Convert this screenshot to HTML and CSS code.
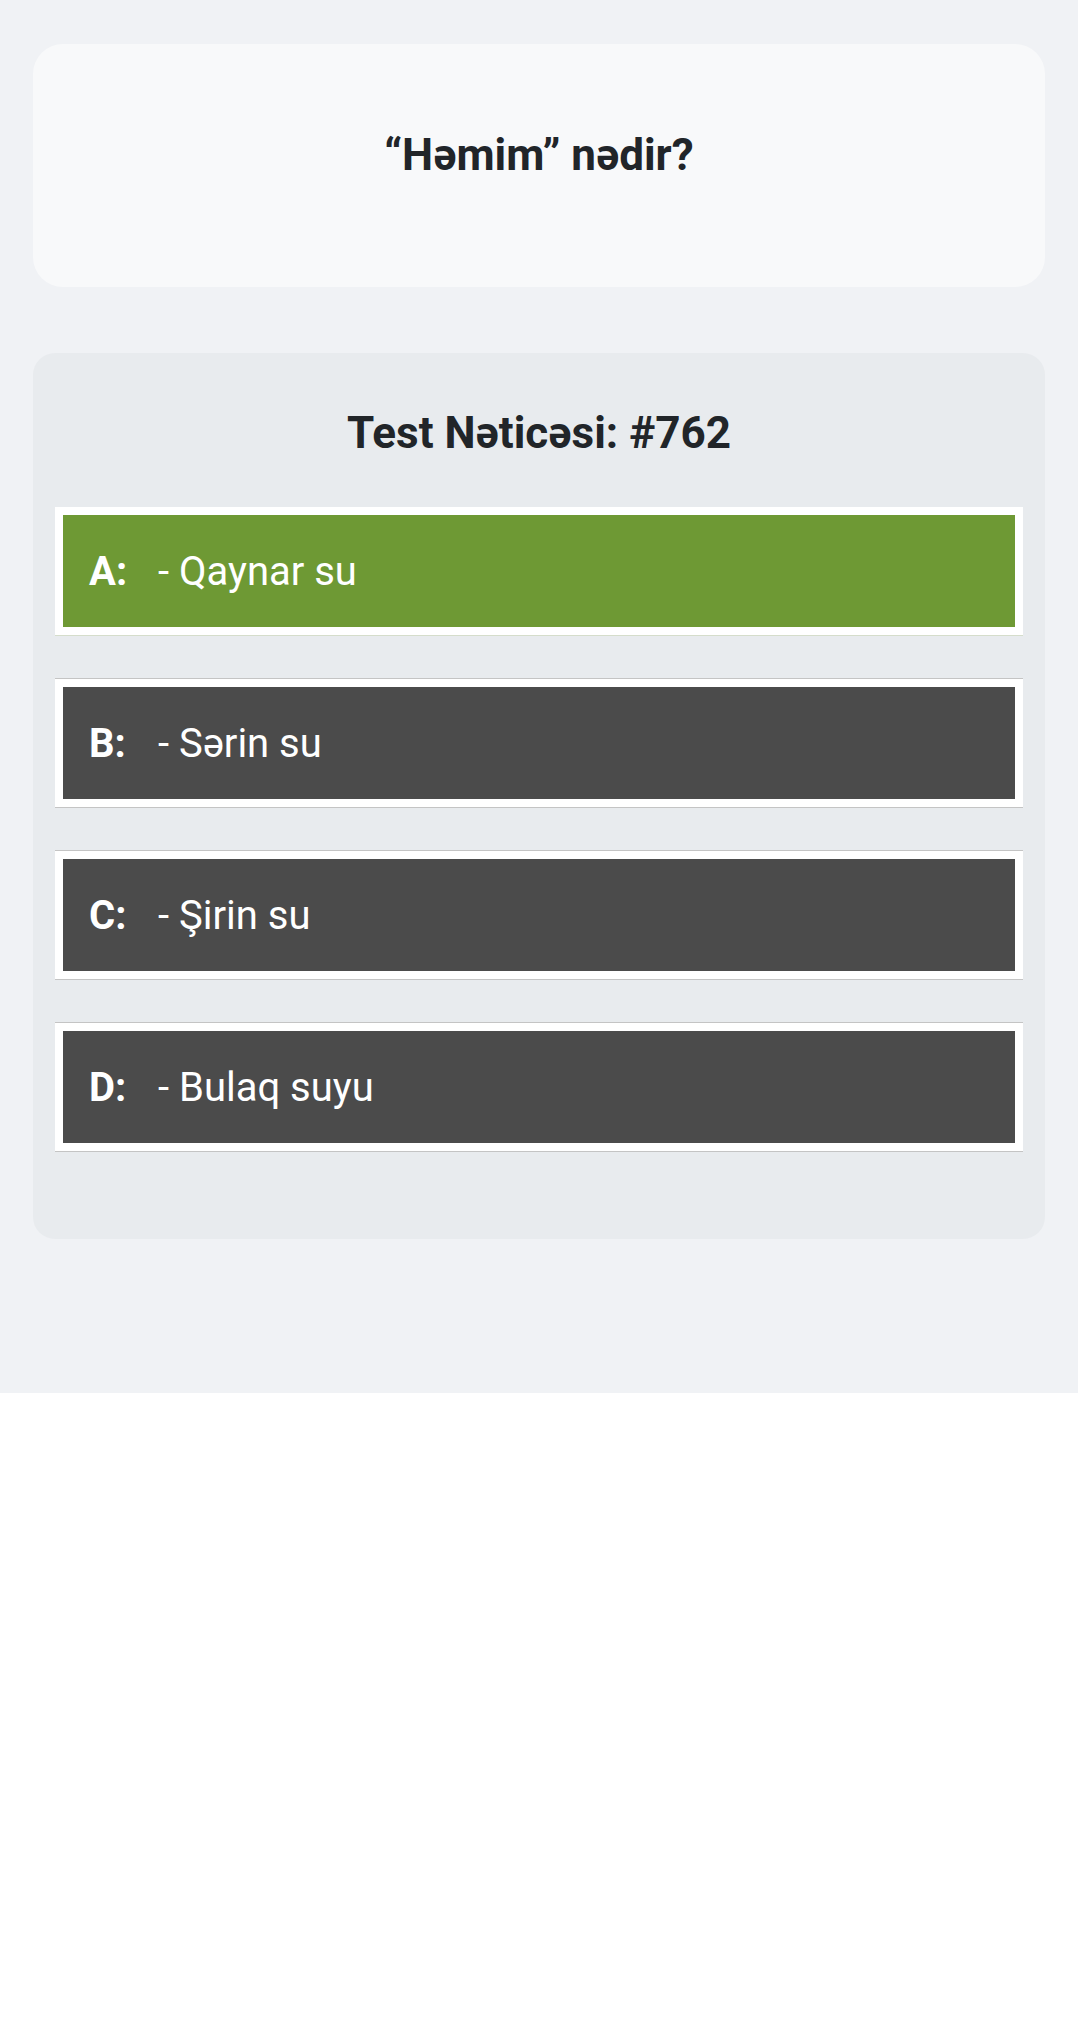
FILE: index.html
```html
<!DOCTYPE html>
<html lang="az">

<head>
    <meta charset="UTF-8">
    <meta name="viewport" content="width=device-width, initial-scale=1.0">
    <title>Test Nəticəsi</title>
    <link rel="stylesheet" href="styles.css">
</head>

<body>
    <main class="page">
        <section class="question-card">
            <h1 class="question">“Həmim” nədir?</h1>
        </section>

        <section class="result-card">
            <h2 class="result-title">Test Nəticəsi: #762</h2>
            <ul class="answers">
                <li class="answer correct"><span class="letter">A:</span>- Qaynar su</li>
                <li class="answer"><span class="letter">B:</span>- Sərin su</li>
                <li class="answer"><span class="letter">C:</span>- Şirin su</li>
                <li class="answer"><span class="letter">D:</span>- Bulaq suyu</li>
            </ul>
        </section>
    </main>
</body>

</html>
```

FILE: styles.css
```css
* {
    padding: 0;
    margin: 0;
    box-sizing: border-box;
}

body {
    font-family: Roboto, "Noto Sans", sans-serif;
    color: #212529;
    background: #fff;
}

.page {
    background: #f0f2f5;
    padding: 44px 33px 154px;
}

.question-card {
    background: #f8f9fa;
    border-radius: 30px;
    padding: 85px 24px 106px;
    text-align: center;
}

.question {
    font-size: 44px;
    font-weight: bold;
}

.result-card {
    margin-top: 66px;
    background: #e8ebee;
    border-radius: 22px;
    padding: 54px 22px 44px;
}

.result-title {
    font-size: 44px;
    font-weight: bold;
    text-align: center;
    margin-bottom: 48px;
}

.answers {
    list-style: none;
}

.answer {
    display: flex;
    align-items: center;
    height: 128px;
    margin-bottom: 44px;
    padding: 0 24px 0 26px;
    border: 8px solid #fff;
    box-shadow: 0 1px 0 #c4c4c4, 0 -1px 0 #c4c4c4;
    background: #4b4b4b;
    color: #fff;
    font-size: 40px;
}

.answer.correct {
    background: #6e9934;
    box-shadow: 0 1px 0 #d5ddcb;
}

.letter {
    font-weight: bold;
    width: 69px;
    flex-shrink: 0;
}
```
